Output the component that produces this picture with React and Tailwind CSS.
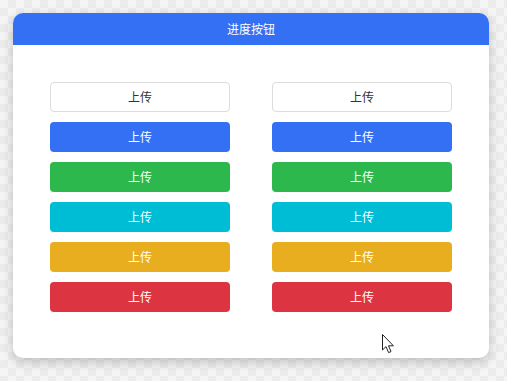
import React from 'react';

const rows = [
  'bg-white text-[#333] border border-[#dcdcdc]',
  'bg-[#3470f3] text-white',
  'bg-[#2cb84d] text-white',
  'bg-[#00bdd6] text-white',
  'bg-[#e9ae20] text-white',
  'bg-[#dc3441] text-white',
];

function Cursor() {
  return (
    <svg
      className="absolute left-[369px] top-[321px]"
      width="13"
      height="20"
      viewBox="0 0 13 20"
    >
      <path
        d="M0.5 0.5 L0.5 16 L4 12.6 L6.6 18.6 L9 17.6 L6.5 11.8 L11.4 11.8 Z"
        fill="#fff"
        stroke="#222"
        strokeWidth="1"
        strokeLinejoin="round"
      />
    </svg>
  );
}

export default function App() {
  return (
    <div className="w-[507px] h-[381px] p-[13px] bg-[repeating-conic-gradient(#ececec_0_25%,#f5f5f5_0_50%)] bg-size-[16px_16px] font-['Noto_Sans_CJK_SC',sans-serif]">
      <div className="relative w-[476px] h-[345px] bg-white rounded-[10px] overflow-hidden shadow-[0_4px_12px_rgba(0,0,0,0.22)]">
        {/* header */}
        <div className="h-[32px] bg-[#3470f3] text-white text-[12px] flex items-center justify-center">
          进度按钮
        </div>

        {/* buttons */}
        <div className="grid grid-cols-[180px_180px] gap-x-[42px] gap-y-[10px] px-[37px] pt-[37px]">
          {rows.map((cls, i) => (
            <React.Fragment key={i}>
              <button className={`h-[30px] rounded-[4px] text-[12px] flex items-center justify-center ${cls}`}>
                上传
              </button>
              <button className={`h-[30px] rounded-[4px] text-[12px] flex items-center justify-center ${cls}`}>
                上传
              </button>
            </React.Fragment>
          ))}
        </div>

        <Cursor />
      </div>
    </div>
  );
}
